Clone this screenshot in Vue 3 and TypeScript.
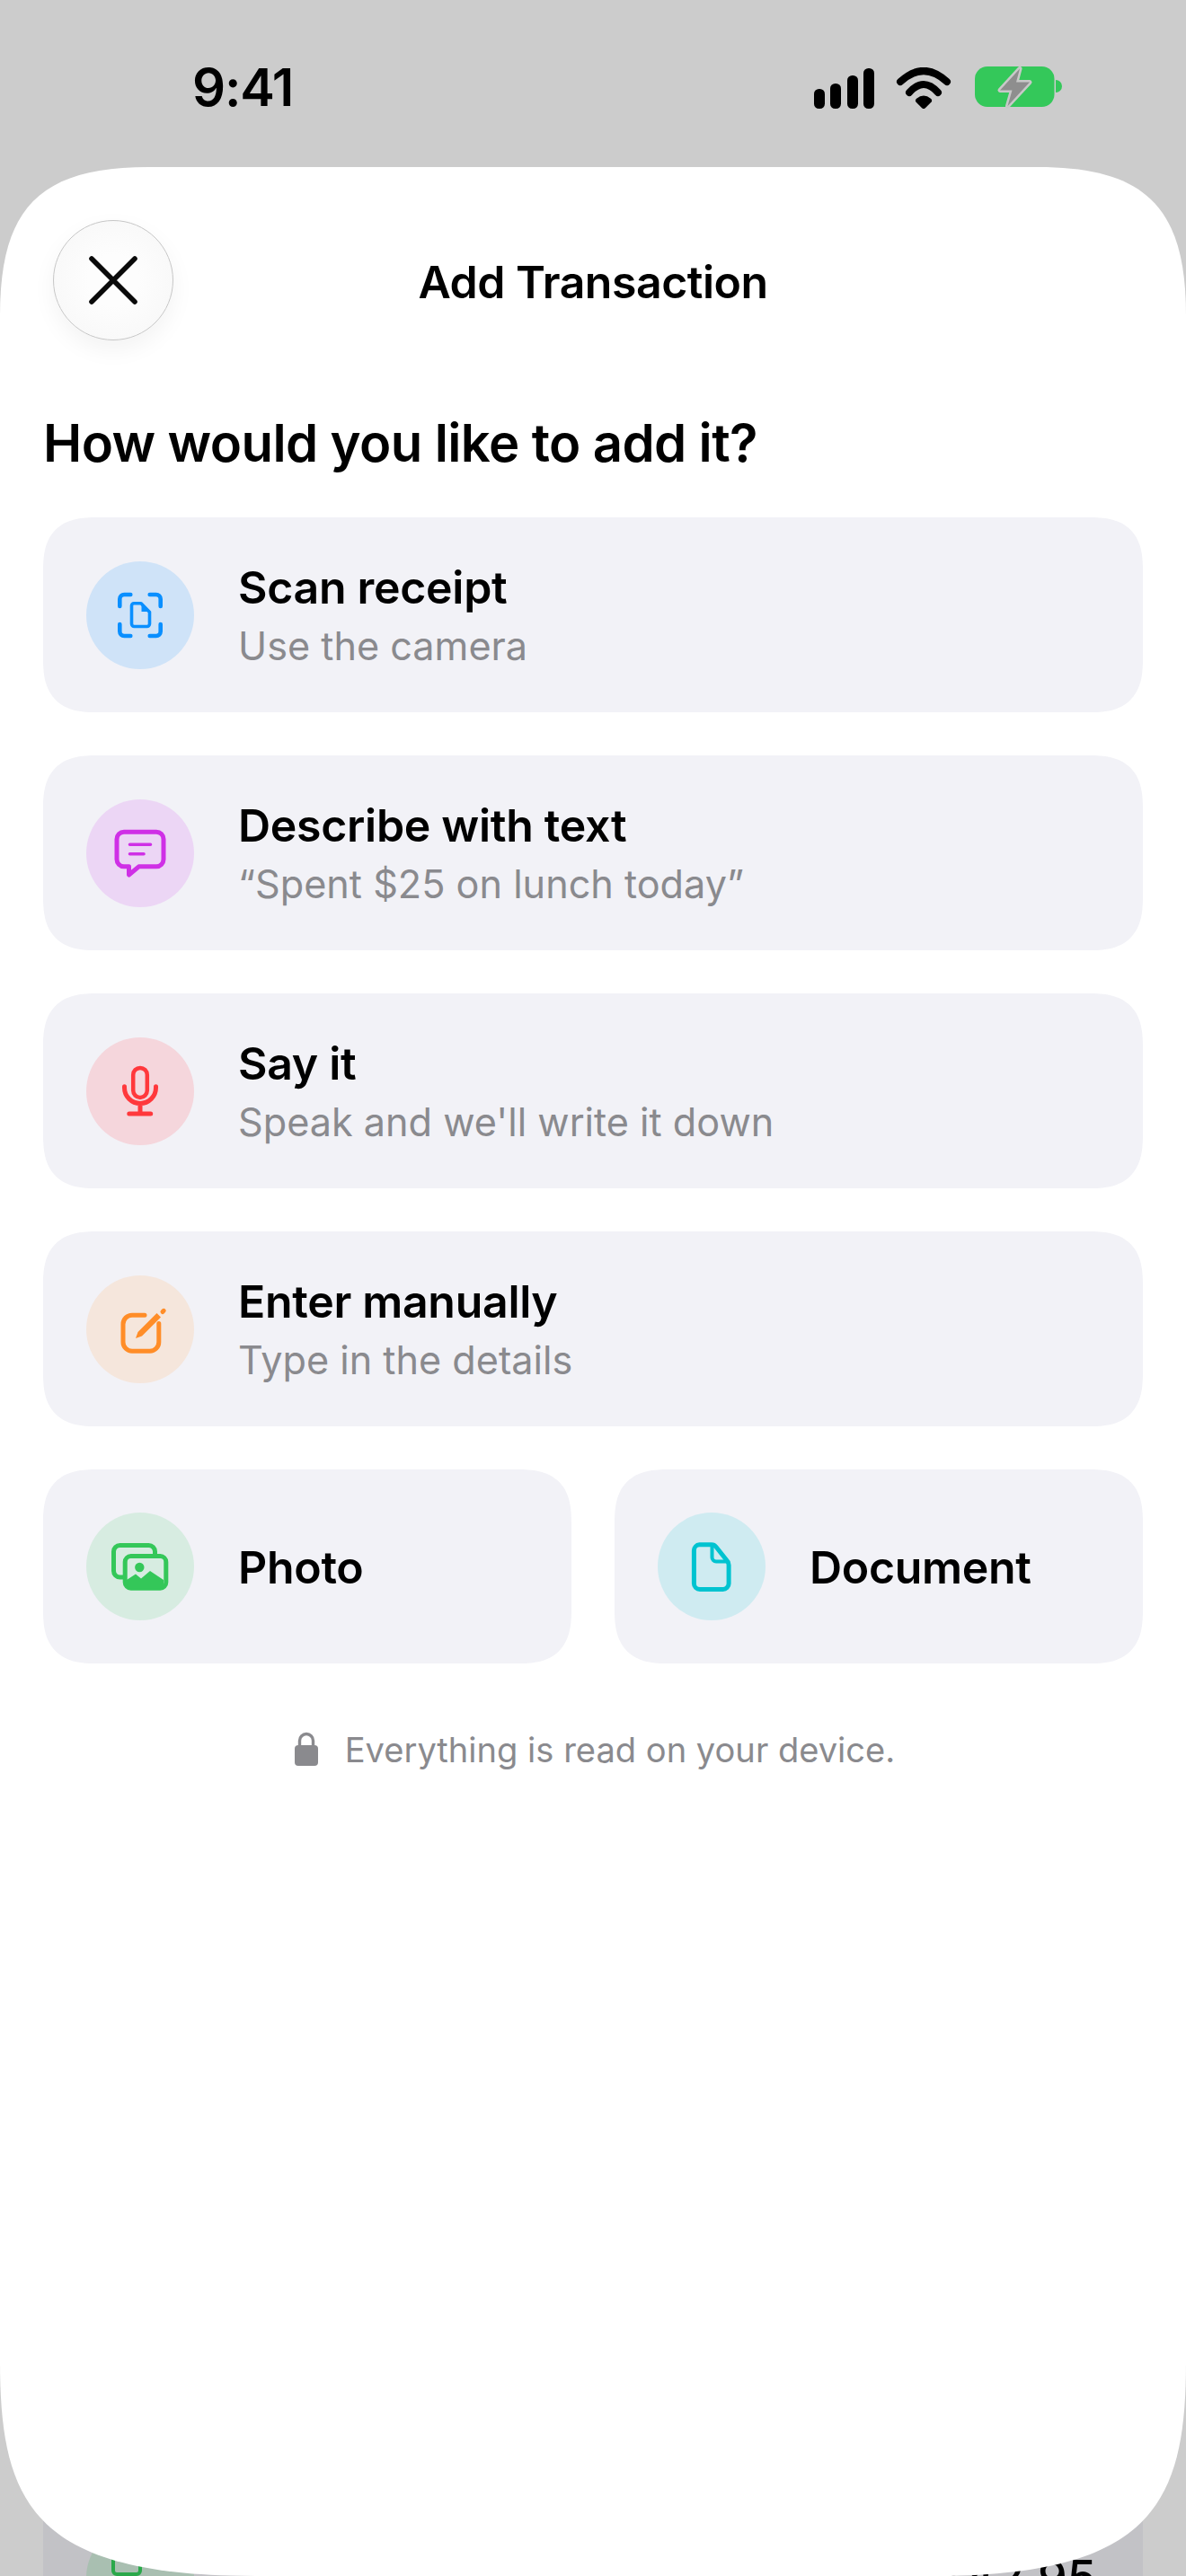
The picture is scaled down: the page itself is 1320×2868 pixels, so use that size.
<script setup lang="ts">
type IconName = 'scan' | 'text' | 'mic' | 'edit' | 'photo' | 'doc'

interface AddOption {
  icon: IconName
  title: string
  sub?: string
}

// full width rows
const rows: AddOption[] = [
  { icon: 'scan', title: 'Scan receipt', sub: 'Use the camera' },
  { icon: 'text', title: 'Describe with text', sub: '“Spent $25 on lunch today”' },
  { icon: 'mic', title: 'Say it', sub: "Speak and we'll write it down" },
  { icon: 'edit', title: 'Enter manually', sub: 'Type in the details' }
]

// half width cards at the bottom
const pairs: AddOption[] = [
  { icon: 'photo', title: 'Photo' },
  { icon: 'doc', title: 'Document' }
]

const groups = [rows, pairs]
</script>

<template>
  <div class="screen">
    <!-- list behind the sheet, only its edges show in the corners -->
    <div class="behind">
      <span class="behind-circle"></span>
      <span class="behind-icon"></span>
      <span class="behind-name">Groceries</span>
      <span class="behind-price">$42.95</span>
    </div>

    <div class="status">
      <span class="time">9:41</span>
      <div class="status-icons">
        <svg class="signal" width="67" height="45" viewBox="0 0 67 45">
          <rect x="0" y="23" width="12" height="22" rx="5.5" />
          <rect x="18" y="17" width="12" height="28" rx="5.5" />
          <rect x="37" y="8" width="12" height="37" rx="5.5" />
          <rect x="55" y="0" width="12" height="45" rx="5.5" />
        </svg>
        <svg class="wifi" width="62" height="46" viewBox="0 0 62 46">
          <path d="M5 16Q31 -8 57 16" />
          <path d="M15 28Q31 10 47 28" />
          <path class="wifi-dot" d="M25 37Q31 32 37 37L31 43Z" />
        </svg>
        <svg class="battery" width="98" height="48" viewBox="0 0 98 48">
          <rect x="0" y="0" width="88.5" height="45" rx="14" fill="#34c85a" />
          <path d="M90 15a7 7 0 0 1 7 7a7 7 0 0 1 -7 7Z" fill="#34c85a" />
          <path
            d="M50 2.5L28 26.5H41.5L36.5 44L61 17.5H46Z"
            fill="#8e8e8e"
            stroke="#c8c8c8"
            stroke-width="5"
            stroke-linejoin="round"
            paint-order="stroke"
          />
        </svg>
      </div>
    </div>

    <section class="sheet">
      <header class="head">
        <button class="close" type="button" aria-label="Close">
          <svg width="54" height="54" viewBox="0 0 54 54">
            <path d="M3 3L51 51M51 3L3 51" />
          </svg>
        </button>
        <h1 class="head-title">Add Transaction</h1>
      </header>

      <h2 class="question">How would you like to add it?</h2>

      <div class="options">
        <template v-for="(group, g) in groups" :key="g">
          <div :class="g === 0 ? 'rows' : 'pairs'">
            <div v-for="opt in group" :key="opt.icon" class="card">
              <svg class="badge" :class="opt.icon" width="120" height="120" viewBox="0 0 120 120">
                <circle class="disc" cx="60" cy="60" r="60" />
                <g v-if="opt.icon === 'scan'" class="ink-line">
                  <path stroke-width="4.6" d="M37.3 50V42a5 5 0 0 1 5-5h7M70.7 37h7a5 5 0 0 1 5 5v8M82.7 70v8a5 5 0 0 1-5 5h-7M49.3 83h-7a5 5 0 0 1-5-5v-8" />
                  <path stroke-width="3.6" d="M53 46.8H61L70.5 56.5V69.5a3 3 0 0 1-3 3H53.5a3 3 0 0 1-3-3V49.3a2.5 2.5 0 0 1 2.5-2.5Z" />
                  <path class="ink-fill" d="M61.5 47L70 56H61.5Z" />
                </g>
                <g v-else-if="opt.icon === 'text'" class="ink-line">
                  <path stroke-width="5" d="M42 36.2H78a8 8 0 0 1 8 8V66.8a8 8 0 0 1-8 8H58.5L47.5 84V74.8H42a8 8 0 0 1-8-8V44.2a8 8 0 0 1 8-8Z" />
                  <path stroke-width="3.6" d="M48.5 50.3H71.5M48.5 60.7H64" />
                </g>
                <g v-else-if="opt.icon === 'mic'" class="ink-line">
                  <rect x="52.2" y="33.9" width="15.6" height="33" rx="7.8" stroke-width="4.5" />
                  <path stroke-width="5" d="M42.5 54.8V56a17.5 17.5 0 0 0 35 0V54.8M60 74V85M47.8 85H71.7" />
                </g>
                <g v-else-if="opt.icon === 'edit'" class="ink-line">
                  <path stroke-width="5" d="M65 44.2H51a10 10 0 0 0-10 10V74.2a10 10 0 0 0 10 10H70.8a10 10 0 0 0 10-10V53.5" />
                  <path class="ink-fill" d="M55 70L57.5 63L78.5 42L83 46.5L62 67.5Z" />
                  <path stroke-width="5" d="M85 40.5L86.2 39.3" />
                </g>
                <g v-else-if="opt.icon === 'photo'" class="ink-line">
                  <rect x="30.5" y="36.5" width="46" height="35.5" rx="7" stroke-width="5" />
                  <rect class="disc" x="43.2" y="48.5" width="45.6" height="35.7" rx="6.5" stroke-width="5" />
                  <circle class="ink-fill" cx="59.3" cy="61" r="5.2" />
                  <path class="ink-fill" d="M45 75L55 68.5L61 73.5L71 65L86 75V80a4 4 0 0 1-4 4H49a4 4 0 0 1-4-4Z" />
                </g>
                <g v-else class="ink-line">
                  <path stroke-width="5" d="M46.5 35.8H60q3 0 5 2.5L76.7 53q2.4 3 2.4 5.5V79a6.5 6.5 0 0 1-6.5 6.5H46.9a6.5 6.5 0 0 1-6.5-6.5V42.3a6.5 6.5 0 0 1 6.1-6.5Z" />
                  <path stroke-width="4" d="M60.5 36.5V50a4.5 4.5 0 0 0 4.5 4.5H78.5" />
                </g>
              </svg>
              <div class="card-text">
                <div class="card-title">{{ opt.title }}</div>
                <div v-if="opt.sub" class="card-sub">{{ opt.sub }}</div>
              </div>
            </div>
          </div>
        </template>
      </div>

      <p class="note">
        <svg class="lock" width="26" height="38" viewBox="0 0 26 38">
          <path d="M5.5 17V10a7.5 7.5 0 0 1 15 0v7" fill="none" stroke="#8a8a8e" stroke-width="3.4" />
          <rect x="0" y="15" width="26" height="23" rx="4" fill="#8a8a8e" />
        </svg>
        <span>Everything is read on your device.</span>
      </p>
    </section>
  </div>
</template>

<style scoped>
.screen {
  position: relative;
  width: 1320px;
  height: 2868px;
  overflow: hidden;
  background: #cccccc;
  font-family: Inter, "Liberation Sans", sans-serif;
  color: #000;
}

/* sits under the sheet */
.behind {
  position: absolute;
  left: 48px;
  right: 48px;
  top: 2780px;
  bottom: 0;
  background: #c2c2c6;
}
.behind-circle {
  position: absolute;
  left: 48px;
  top: 30px;
  width: 120px;
  height: 120px;
  border-radius: 50%;
  background: #a9bfb1;
}
.behind-icon {
  position: absolute;
  left: 76px;
  top: 58px;
  width: 34px;
  height: 30px;
  box-sizing: border-box;
  border: 4px solid #2aa84a;
  border-radius: 0 0 6px 6px;
}
.behind-name {
  position: absolute;
  left: 170px;
  top: 80px;
  font-size: 52px;
  font-weight: 600;
}
.behind-price {
  position: absolute;
  right: 52px;
  top: 58px;
  font-size: 52px;
  font-weight: 500;
}

.status {
  position: relative;
  display: flex;
  justify-content: space-between;
  align-items: flex-start;
  box-sizing: border-box;
  height: 186px;
  padding: 64px 137px 0 214px;
}
.time {
  font-size: 58px;
  line-height: 66px;
  font-weight: 600;
  letter-spacing: -1.2px;
}
.status-icons {
  display: flex;
  align-items: flex-start;
  gap: 24px;
  padding-top: 10px;
}
.signal {
  margin-top: 2px;
  fill: #000;
}
.wifi {
  margin-top: 1px;
}
.wifi path {
  fill: none;
  stroke: #000;
  stroke-width: 8;
  stroke-linecap: round;
}
.wifi .wifi-dot {
  fill: #000;
  stroke-width: 6;
  stroke-linejoin: round;
}
.battery {
  margin-left: 2px;
  overflow: visible;
}

.sheet {
  position: relative;
  box-sizing: border-box;
  height: 2682px;
  padding: 59px 48px 0;
  background: #fff;
  clip-path: path("M0 165C0 45 45 0 165 0H1155C1275 0 1320 45 1320 165V2444C1320 2604 1280 2682 1035 2682H285C40 2682 0 2604 0 2444Z");
}

.head {
  display: grid;
  grid-template-columns: 1fr auto 1fr;
  align-items: center;
  padding-left: 11px;
  padding-right: 11px;
}
.close {
  display: flex;
  align-items: center;
  justify-content: center;
  box-sizing: border-box;
  width: 134px;
  height: 134px;
  padding: 0;
  border: 1.5px solid #c6c6c6;
  border-radius: 50%;
  background: radial-gradient(circle, #fdfdfd 30%, #f6f6f6 100%);
  box-shadow: 0 10px 26px rgba(0, 0, 0, 0.05);
}
.close path {
  fill: none;
  stroke: #0a0a0a;
  stroke-width: 5.6;
  stroke-linecap: round;
}
.head-title {
  margin: 3px 0 0;
  font-size: 50px;
  line-height: 60px;
  font-weight: 600;
  letter-spacing: -0.5px;
}

.question {
  margin: 78px 0 47px;
  font-size: 58px;
  line-height: 72px;
  font-weight: 600;
  letter-spacing: -0.6px;
}

.options,
.rows {
  display: flex;
  flex-direction: column;
  gap: 48px;
}
.pairs {
  display: grid;
  grid-template-columns: 1fr 1fr;
  gap: 48px;
}

.card {
  display: flex;
  align-items: center;
  gap: 49px;
  box-sizing: border-box;
  height: 217px;
  padding: 0 48px;
  background: #f2f2f7;
  border-radius: 48px;
}
@supports (corner-shape: superellipse(1.4)) {
  .card {
    border-radius: 60px;
    corner-shape: superellipse(1.4);
  }
}
.pairs .card {
  height: 216px;
}

.badge {
  flex: none;
}
.card-text {
  padding-top: 2px;
}
.card-title {
  font-size: 50px;
  line-height: 64px;
  font-weight: 600;
  letter-spacing: -0.3px;
}
.pairs .card-text {
  padding-top: 0;
}
.pairs .card-title {
  margin-top: 2px;
}
.card-sub {
  margin-top: 2px;
  font-size: 43.2px;
  line-height: 62px;
  color: #8a8a8e;
}

/* each option has its own tint and ink colour */
.badge { --ink: #000; --tint: #eee; }
.badge.scan { --ink: #0a8fff; --tint: #cfe3f8; }
.badge.text { --ink: #cf30e6; --tint: #ecd6f5; }
.badge.mic { --ink: #ff383c; --tint: #f5d6dc; }
.badge.edit { --ink: #ff8d28; --tint: #f5e6dc; }
.badge.photo { --ink: #34c759; --tint: #d7ece1; }
.badge.doc { --ink: #00c3d0; --tint: #cfebf1; }

.disc {
  fill: var(--tint);
}
.ink-line {
  fill: none;
  stroke: var(--ink);
  stroke-linecap: round;
  stroke-linejoin: round;
}
.ink-line .disc {
  fill: var(--tint);
}
.ink-fill {
  fill: var(--ink);
  stroke: none;
}

.note {
  display: flex;
  align-items: center;
  justify-content: center;
  gap: 30px;
  margin: 72px 0 0;
  padding-left: 4px;
  font-size: 38.1px;
  line-height: 48px;
  color: #8a8a8e;
}
.lock {
  flex: none;
  margin-top: -3px;
}
</style>

<style>
html,
body {
  margin: 0;
  background: #cccccc;
}
</style>
